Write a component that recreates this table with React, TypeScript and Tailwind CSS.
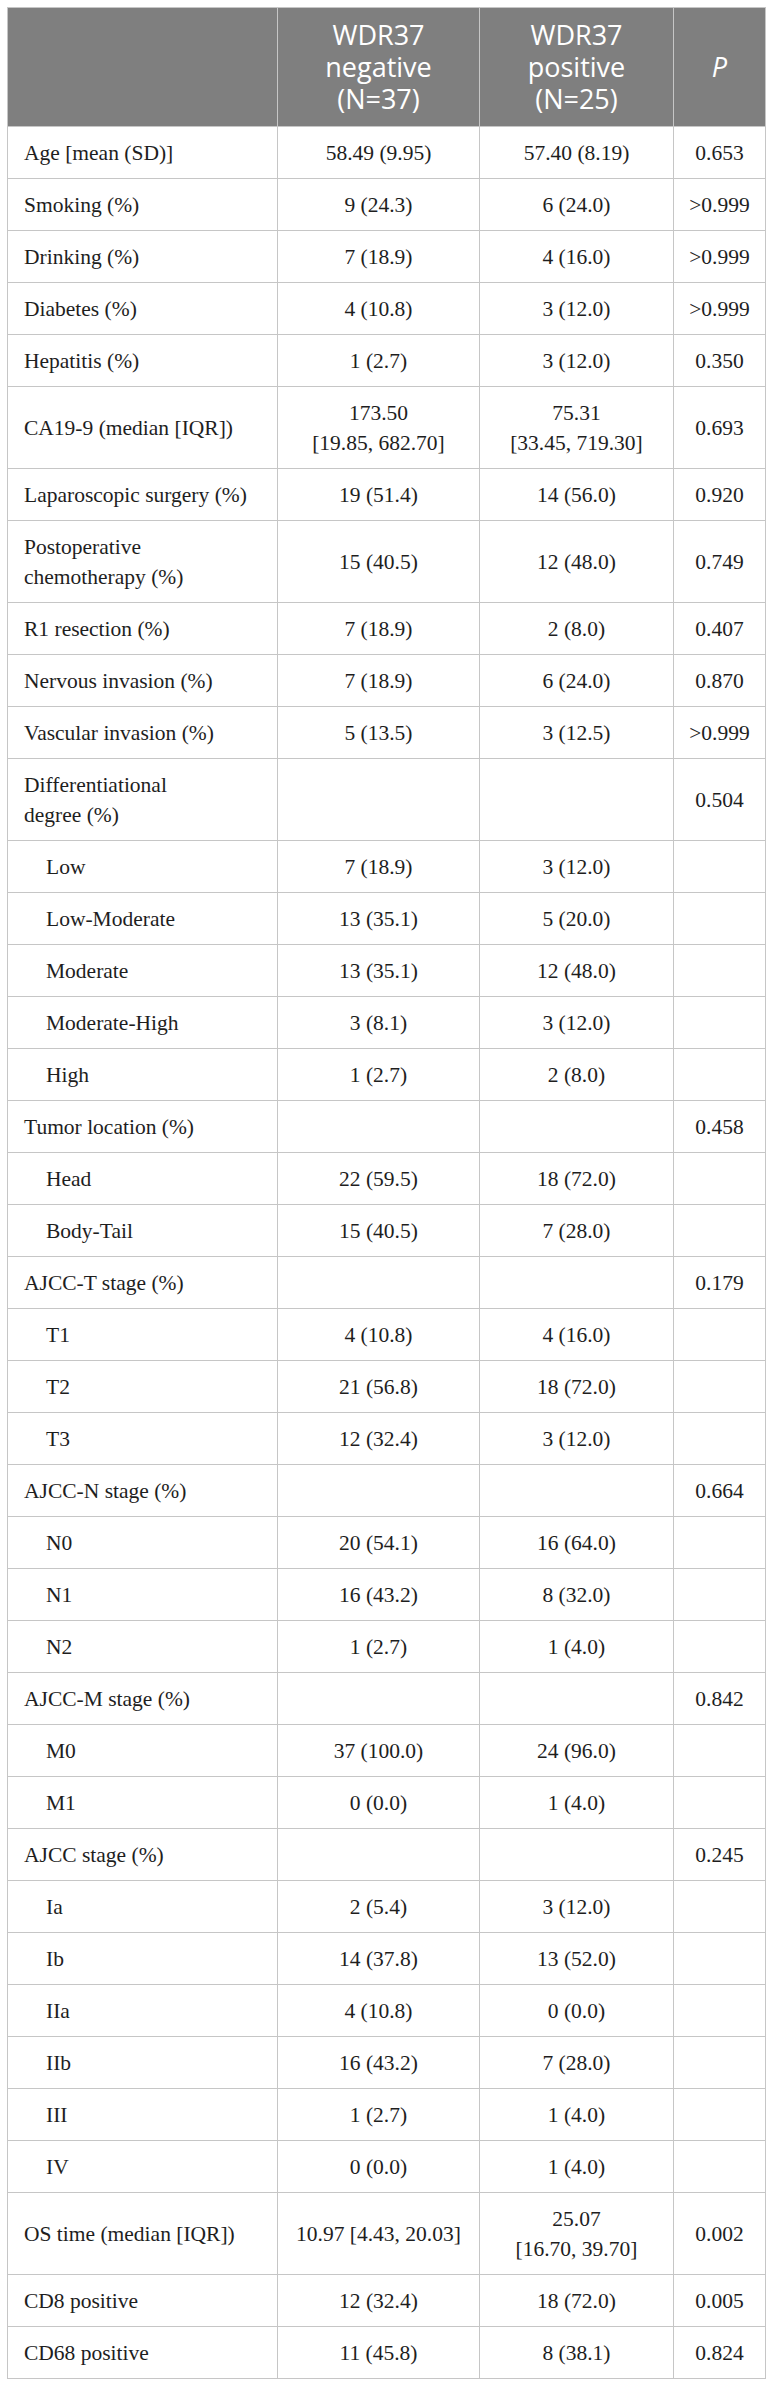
type Row = {
  label: string;
  neg?: string;
  pos?: string;
  p?: string;
  sub?: boolean;
};

const rows: Row[] = [
  { label: 'Age [mean (SD)]', neg: '58.49 (9.95)', pos: '57.40 (8.19)', p: '0.653' },
  { label: 'Smoking (%)', neg: '9 (24.3)', pos: '6 (24.0)', p: '>0.999' },
  { label: 'Drinking (%)', neg: '7 (18.9)', pos: '4 (16.0)', p: '>0.999' },
  { label: 'Diabetes (%)', neg: '4 (10.8)', pos: '3 (12.0)', p: '>0.999' },
  { label: 'Hepatitis (%)', neg: '1 (2.7)', pos: '3 (12.0)', p: '0.350' },
  { label: 'CA19-9 (median [IQR])', neg: '173.50\n[19.85, 682.70]', pos: '75.31\n[33.45, 719.30]', p: '0.693' },
  { label: 'Laparoscopic surgery (%)', neg: '19 (51.4)', pos: '14 (56.0)', p: '0.920' },
  { label: 'Postoperative\nchemotherapy (%)', neg: '15 (40.5)', pos: '12 (48.0)', p: '0.749' },
  { label: 'R1 resection (%)', neg: '7 (18.9)', pos: '2 (8.0)', p: '0.407' },
  { label: 'Nervous invasion (%)', neg: '7 (18.9)', pos: '6 (24.0)', p: '0.870' },
  { label: 'Vascular invasion (%)', neg: '5 (13.5)', pos: '3 (12.5)', p: '>0.999' },
  { label: 'Differentiational\ndegree (%)', p: '0.504' },
  { label: 'Low', neg: '7 (18.9)', pos: '3 (12.0)', sub: true },
  { label: 'Low-Moderate', neg: '13 (35.1)', pos: '5 (20.0)', sub: true },
  { label: 'Moderate', neg: '13 (35.1)', pos: '12 (48.0)', sub: true },
  { label: 'Moderate-High', neg: '3 (8.1)', pos: '3 (12.0)', sub: true },
  { label: 'High', neg: '1 (2.7)', pos: '2 (8.0)', sub: true },
  { label: 'Tumor location (%)', p: '0.458' },
  { label: 'Head', neg: '22 (59.5)', pos: '18 (72.0)', sub: true },
  { label: 'Body-Tail', neg: '15 (40.5)', pos: '7 (28.0)', sub: true },
  { label: 'AJCC-T stage (%)', p: '0.179' },
  { label: 'T1', neg: '4 (10.8)', pos: '4 (16.0)', sub: true },
  { label: 'T2', neg: '21 (56.8)', pos: '18 (72.0)', sub: true },
  { label: 'T3', neg: '12 (32.4)', pos: '3 (12.0)', sub: true },
  { label: 'AJCC-N stage (%)', p: '0.664' },
  { label: 'N0', neg: '20 (54.1)', pos: '16 (64.0)', sub: true },
  { label: 'N1', neg: '16 (43.2)', pos: '8 (32.0)', sub: true },
  { label: 'N2', neg: '1 (2.7)', pos: '1 (4.0)', sub: true },
  { label: 'AJCC-M stage (%)', p: '0.842' },
  { label: 'M0', neg: '37 (100.0)', pos: '24 (96.0)', sub: true },
  { label: 'M1', neg: '0 (0.0)', pos: '1 (4.0)', sub: true },
  { label: 'AJCC stage (%)', p: '0.245' },
  { label: 'Ia', neg: '2 (5.4)', pos: '3 (12.0)', sub: true },
  { label: 'Ib', neg: '14 (37.8)', pos: '13 (52.0)', sub: true },
  { label: 'IIa', neg: '4 (10.8)', pos: '0 (0.0)', sub: true },
  { label: 'IIb', neg: '16 (43.2)', pos: '7 (28.0)', sub: true },
  { label: 'III', neg: '1 (2.7)', pos: '1 (4.0)', sub: true },
  { label: 'IV', neg: '0 (0.0)', pos: '1 (4.0)', sub: true },
  { label: 'OS time (median [IQR])', neg: '10.97 [4.43, 20.03]', pos: '25.07\n[16.70, 39.70]', p: '0.002' },
  { label: 'CD8 positive', neg: '12 (32.4)', pos: '18 (72.0)', p: '0.005' },
  { label: 'CD68 positive', neg: '11 (45.8)', pos: '8 (38.1)', p: '0.824' },
];

const cell = 'border border-[#c6c6c6] py-[10.5px] align-middle whitespace-pre-line';
const head = 'border border-[#c6c6c6] py-[11px] px-2 text-center align-middle font-normal';

export default function App() {
  return (
    <div className="min-h-screen bg-white p-[7px]">
      <table className="w-full table-fixed border-collapse font-['Liberation_Serif',serif] text-[21.5px] leading-[30px] text-[#1e1e1e]">
        <colgroup>
          <col className="w-[270px]" />
          <col className="w-[202px]" />
          <col className="w-[194px]" />
          <col className="w-[92px]" />
        </colgroup>
        <thead>
          <tr className="bg-[#7f7f7f] font-['Open_Sans',sans-serif] text-[27px] leading-[32px] text-white">
            <th className={head} />
            <th className={head}>
              WDR37
              <br />
              negative
              <br />
              (N=37)
            </th>
            <th className={head}>
              WDR37
              <br />
              positive
              <br />
              (N=25)
            </th>
            <th className={head}>
              <i>P</i>
            </th>
          </tr>
        </thead>
        <tbody>
          {rows.map((r, i) => (
            <tr key={i}>
              <td className={`${cell} ${r.sub ? 'pl-[38px]' : 'pl-4'} pr-2 text-left`}>{r.label}</td>
              <td className={`${cell} px-2 text-center`}>{r.neg ?? ''}</td>
              <td className={`${cell} px-2 text-center`}>{r.pos ?? ''}</td>
              <td className={`${cell} px-1 text-center`}>{r.p ?? ''}</td>
            </tr>
          ))}
        </tbody>
      </table>
    </div>
  );
}
